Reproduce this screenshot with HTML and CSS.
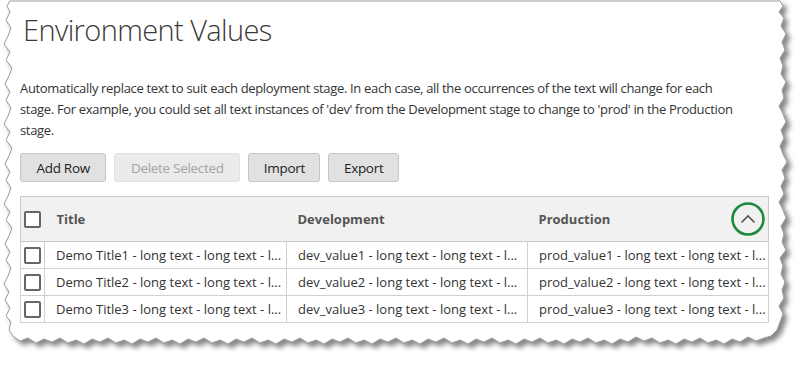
FILE: index.html
```html
<!DOCTYPE html>
<html>
<head>
<meta charset="utf-8">
<link rel="stylesheet" href="styles.css">
</head>
<body>
<div class="sheet">
  <svg class="paper" width="807" height="369" viewBox="0 0 807 369" aria-hidden="true">
    <defs>
      <filter id="shadow" x="-5%" y="-5%" width="115%" height="120%">
        <feDropShadow dx="4" dy="4" stdDeviation="2.5" flood-color="#555" flood-opacity="0.7"/>
      </filter>
    </defs>
    <path filter="url(#shadow)" fill="#fff" stroke="#9a9a9a" stroke-width="1"
      d="M10,1 L780,1 L783,6 L779,12 L784,18 L781,26 L786,34 L782,42 L785,50 L780,58 L783,66 L781,74 L786,82 L782,90 L784,98 L779,106 L783,114 L786,122 L781,130 L784,138 L780,146 L783,154 L787,162 L782,170 L785,178 L781,186 L784,194 L779,202 L783,210 L786,218 L781,226 L784,234 L782,242 L786,250 L780,258 L783,266 L781,274 L785,282 L782,290 L784,298 L779,306 L783,314 L780,322 L777,330 L771,336 L764,338
      L756,341 L748,337 L740,342 L732,339 L724,344 L716,340 L708,343 L700,338 L692,342 L684,339 L676,344 L668,340 L660,343 L652,338 L644,341 L636,337 L628,342 L620,339 L612,344 L604,340 L596,343 L588,338 L580,342 L572,339 L564,344 L556,340 L548,343 L540,338 L532,342 L524,339 L516,344 L508,340 L500,343 L492,338 L484,342 L476,339 L468,344 L460,340 L452,343 L444,338 L436,342 L428,339 L420,344 L412,340 L404,343 L396,338 L388,342 L380,339 L372,344 L364,340 L356,343 L348,338 L340,342 L332,339 L324,344 L316,340 L308,343 L300,338 L292,342 L284,339 L276,344 L268,340 L260,343 L252,338 L244,342 L236,339 L228,344 L220,340 L212,343 L204,338 L196,342 L188,339 L180,344 L172,340 L164,343 L156,338 L148,342 L140,339 L132,344 L124,340 L116,343 L108,338 L100,342 L92,339 L84,344 L76,340 L68,343 L60,338 L52,342 L44,339 L36,343 L28,338 L20,341 L13,336 L9,330
      L11,322 L6,316 L10,308 L5,300 L9,292 L4,284 L8,276 L11,268 L6,260 L10,252 L5,244 L9,236 L12,228 L6,220 L10,212 L4,204 L8,196 L11,188 L6,180 L10,172 L5,164 L9,156 L12,148 L6,140 L10,132 L4,124 L8,116 L11,108 L6,100 L10,92 L5,84 L9,76 L12,68 L6,60 L10,52 L4,44 L8,36 L11,28 L6,20 L10,12 L7,6 Z"/>
  </svg>
  <div class="content">
    <h1 class="title">Environment Values</h1>
    <p class="intro">Automatically replace text to suit each deployment stage. In each case, all the occurrences of the text will change for each<br>stage. For example, you could set all text instances of 'dev' from the Development stage to change to 'prod' in the Production<br>stage.</p>
    <div class="toolbar">
      <button class="btn btn-add">Add Row</button>
      <button class="btn btn-delete" disabled>Delete Selected</button>
      <button class="btn btn-import">Import</button>
      <button class="btn btn-export">Export</button>
    </div>
    <table class="grid">
      <thead>
        <tr class="head-row">
          <th class="col-check"><span class="checkbox"></span></th>
          <th class="col-title">Title</th>
          <th class="col-dev">Development</th>
          <th class="col-prod">
            <div class="prod-head">
              <span>Production</span>
              <span class="collapse">
                <svg width="34" height="34" viewBox="0 0 34 34">
                  <circle cx="17" cy="17" r="15.5" fill="none" stroke="#1c8a3a" stroke-width="2.6"/>
                  <path d="M10.5 20.5 L17 14 L23.5 20.5" fill="none" stroke="#555" stroke-width="1.6"/>
                </svg>
              </span>
            </div>
          </th>
        </tr>
      </thead>
      <tbody>
        <tr>
          <td class="col-check"><span class="checkbox"></span></td>
          <td class="cell">Demo Title1 - long text - long text - l...</td>
          <td class="cell">dev_value1 - long text - long text - l...</td>
          <td class="cell">prod_value1 - long text - long text - l...</td>
        </tr>
        <tr>
          <td class="col-check"><span class="checkbox"></span></td>
          <td class="cell">Demo Title2 - long text - long text - l...</td>
          <td class="cell">dev_value2 - long text - long text - l...</td>
          <td class="cell">prod_value2 - long text - long text - l...</td>
        </tr>
        <tr>
          <td class="col-check"><span class="checkbox"></span></td>
          <td class="cell">Demo Title3 - long text - long text - l...</td>
          <td class="cell">dev_value3 - long text - long text - l...</td>
          <td class="cell">prod_value3 - long text - long text - l...</td>
        </tr>
      </tbody>
    </table>
  </div>
</div>
</body>
</html>
```

FILE: styles.css
```css
* { box-sizing: border-box; }
html, body { margin: 0; padding: 0; background: #fff; }
body {
  font-family: "Open Sans", "Noto Sans", sans-serif;
  color: #333;
}
.sheet {
  position: relative;
  width: 807px;
  height: 369px;
  overflow: hidden;
}
.paper {
  position: absolute;
  left: 0;
  top: 0;
}
.content {
  position: relative;
  padding: 11px 0 0 20px;
}
.title {
  margin: 0 0 0 3px;
  font-weight: 300;
  font-size: 29px;
  line-height: 38px;
  color: #3a3a3a;
  letter-spacing: -0.6px;
}
.intro {
  margin: 29px 0 0 0;
  font-size: 13px;
  line-height: 21px;
  color: #333;
  white-space: nowrap;
  letter-spacing: -0.33px;
}
.toolbar {
  display: flex;
  gap: 8px;
  margin-top: 12px;
}
.btn {
  font-family: inherit;
  font-size: 13.5px;
  letter-spacing: -0.3px;
  height: 29px;
  padding: 0 15px;
  border: 1px solid #c6c6c6;
  border-radius: 3px;
  background: #e1e1e1;
  color: #222;
}
.btn-add { padding: 0 15.5px; }
.btn-delete {
  background: #ebebeb;
  border-color: #e2e2e2;
  color: #a3a3a3;
  padding: 0 15.5px;
}
.btn-import, .btn-export { padding: 0 14.5px; }
.grid {
  margin-top: 14px;
  border-collapse: collapse;
  table-layout: fixed;
  width: 748px;
  font-size: 13px;
}
.grid th, .grid td {
  padding: 0;
  border: 1px solid #d0d0d0;
  text-align: left;
  white-space: nowrap;
  overflow: hidden;
}
.head-row th {
  background: #f1f1f1;
  height: 45px;
  border-left: none;
  border-right: none;
  font-weight: 700;
  color: #555;
  border-color: #c8c8c8;
}
.head-row th:first-child { border-left: 1px solid #c8c8c8; }
.head-row th:last-child { border-right: 1px solid #c8c8c8; }
.col-check { width: 24px; }
.col-title { width: 242px; padding-left: 12px !important; }
.col-dev { width: 241px; padding-left: 11px !important; }
.col-prod { width: 241px; padding-left: 11px !important; }
.prod-head {
  display: flex;
  align-items: center;
  justify-content: space-between;
  padding-right: 3px;
}
.collapse { display: flex; }
.grid tbody td { height: 27px; line-height: 18px; }
.cell { padding-left: 11px !important; color: #333; }
.col-check { text-align: center; }
.checkbox {
  display: block;
  margin: 0 auto;
  width: 17px;
  height: 17px;
  border: 2px solid #666;
  border-radius: 2px;
  background: #fff;
}
```
